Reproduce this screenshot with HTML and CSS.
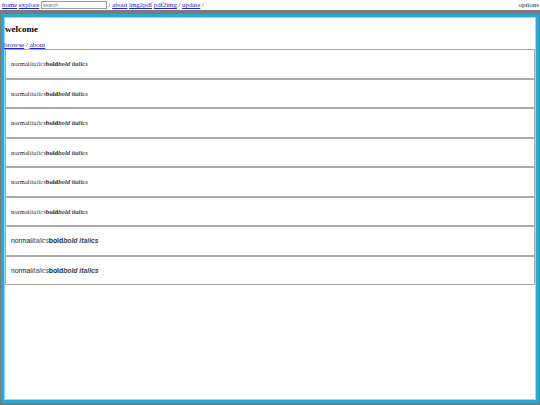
FILE: index.html
```html
<!DOCTYPE html>
<html>
<head>
<meta charset="utf-8">
<link rel="stylesheet" href="styles.css">
</head>
<body>
<div class="topbar">
  <div class="nav"><a href="#">home</a> <a href="#">explore</a> <input class="search" type="text" placeholder="search"> / <a href="#">about</a> <a href="#">img2pdf</a> <a href="#">pdf2img</a> / <a href="#">update</a> /</div>
  <div class="options">options</div>
</div>
<div class="panel">
  <h1 class="title">welcome</h1>
  <div class="crumbs"><a href="#">browse</a> / <a href="#">about</a></div>
  <div class="list">
    <div class="row serif">normal<i>italics</i><b>bold</b><b><i>bold italics</i></b></div>
    <div class="row serif">normal<i>italics</i><b>bold</b><b><i>bold italics</i></b></div>
    <div class="row serif">normal<i>italics</i><b>bold</b><b><i>bold italics</i></b></div>
    <div class="row serif">normal<i>italics</i><b>bold</b><b><i>bold italics</i></b></div>
    <div class="row serif">normal<i>italics</i><b>bold</b><b><i>bold italics</i></b></div>
    <div class="row serif">normal<i>italics</i><b>bold</b><b><i>bold italics</i></b></div>
    <div class="row sans">normal<i>italics</i><b>bold</b><b><i>bold italics</i></b></div>
    <div class="row sans">normal<i>italics</i><b>bold</b><b><i>bold italics</i></b></div>
  </div>
</div>
</body>
</html>
```
FILE: styles.css
```css
html, body {
  margin: 0;
  padding: 0;
  height: 100%;
}
body {
  background: #7a7a7a;
  font-family: "Liberation Serif", serif;
  display: flex;
  flex-direction: column;
}
a { color: #2222cc; }
.topbar {
  height: 10px;
  background: #fff;
  display: flex;
  justify-content: space-between;
  align-items: center;
  font-size: 6.8px;
  line-height: 10px;
  white-space: nowrap;
}
.nav { padding-left: 2px; }
.search {
  width: 66px;
  height: 8px;
  box-sizing: border-box;
  font-size: 5px;
  padding: 0 1px;
  margin: 0;
  border: 1px solid #99a;
  vertical-align: middle;
  font-family: "Liberation Sans", sans-serif;
}
.options { padding-right: 1px; color: #222; font-size: 7px; }
.panel {
  flex: 1;
  margin: 4px 1px 2px 1px;
  border: 3px solid #2ea6d2;
  box-shadow: inset 0 0 0 1px #7be6f6;
  background: #fff;
  padding: 0 1px 0 1px;
  display: flex;
  flex-direction: column;
}
.title {
  font-size: 9px;
  margin: 6px 0 0 0;
  line-height: 12px;
}
.crumbs {
  font-size: 7px;
  margin: 6px 0 0 -1px;
  line-height: 8px;
}
.list {
  border: 1px solid #aaa;
}
.row {
  height: 27.5px;
  border-bottom: 2px solid #aaa;
  padding-left: 5px;
  display: flex;
  align-items: center;
  color: #222;
}
.row i { color: #444; }
.row:last-child { border-bottom: 0; }
.serif { font-family: "Liberation Serif", serif; font-size: 6.6px; }
.sans { font-family: "Liberation Sans", sans-serif; font-size: 6.8px; }
```
